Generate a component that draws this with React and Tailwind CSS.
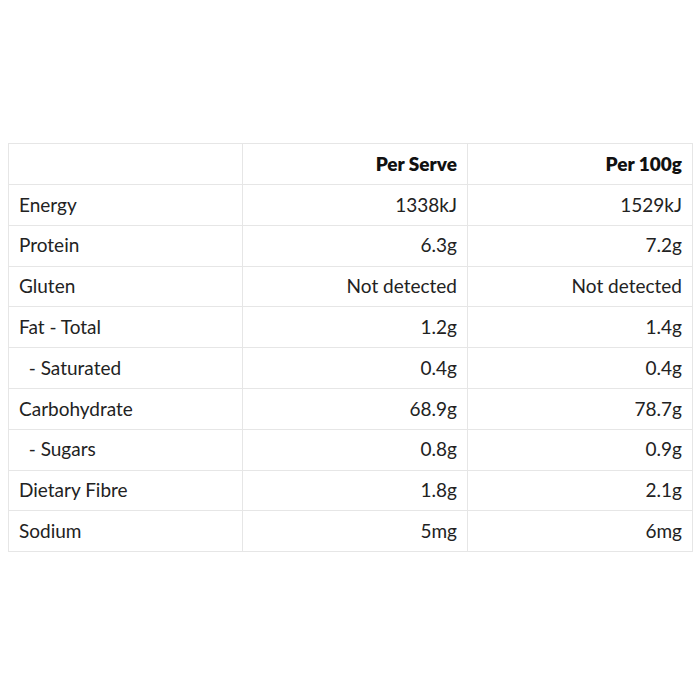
const rows = [
  ['Energy', '1338kJ', '1529kJ'],
  ['Protein', '6.3g', '7.2g'],
  ['Gluten', 'Not detected', 'Not detected'],
  ['Fat - Total', '1.2g', '1.4g'],
  ['\u00a0\u00a0- Saturated', '0.4g', '0.4g'],
  ['Carbohydrate', '68.9g', '78.7g'],
  ['\u00a0\u00a0- Sugars', '0.8g', '0.9g'],
  ['Dietary Fibre', '1.8g', '2.1g'],
  ['Sodium', '5mg', '6mg'],
];

export default function App() {
  return (
    <div className="w-[700px] h-[700px] bg-white pt-[143px] px-[8px] font-['Lato',sans-serif] text-[19px] text-[#222]">
      <table className="w-[684px] border-collapse table-fixed">
        <colgroup>
          <col className="w-[234px]" />
          <col className="w-[225px]" />
          <col className="w-[225px]" />
        </colgroup>
        <thead>
          <tr className="h-[41px]">
            <th className="border border-[#e6e6e6] px-[10px]"></th>
            <th className="border border-[#e6e6e6] px-[10px] text-right font-extrabold text-[#111]">Per Serve</th>
            <th className="border border-[#e6e6e6] px-[10px] text-right font-extrabold text-[#111]">Per 100g</th>
          </tr>
        </thead>
        <tbody>
          {rows.map((r, i) => (
            <tr key={i} className="h-[40.8px]">
              <td className="border border-[#e6e6e6] px-[10px] whitespace-pre">{r[0]}</td>
              <td className="border border-[#e6e6e6] px-[10px] text-right">{r[1]}</td>
              <td className="border border-[#e6e6e6] px-[10px] text-right">{r[2]}</td>
            </tr>
          ))}
        </tbody>
      </table>
    </div>
  );
}
